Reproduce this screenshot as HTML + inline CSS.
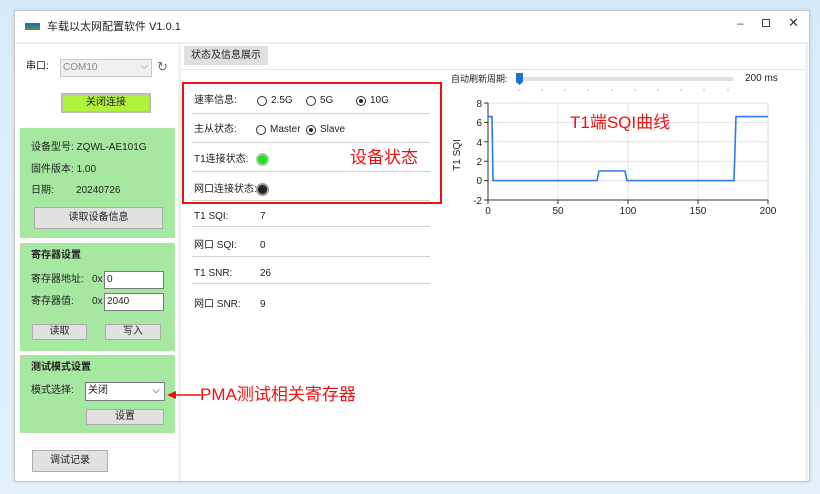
<!DOCTYPE html>
<html><head><meta charset="utf-8"><style>
*{margin:0;padding:0;box-sizing:border-box}
body{width:820px;height:494px;overflow:hidden;background:linear-gradient(180deg,#d6ebfa,#e3f1fb);font-family:"Liberation Sans","Noto Sans CJK SC",sans-serif;font-size:10px;line-height:12px;color:#222;position:relative}
.a{position:absolute;white-space:nowrap;line-height:12px}
.win{position:absolute;left:14px;top:10px;width:796px;height:472px;background:#fff;border:1px solid #c8c8c8;box-shadow:0 0 3px rgba(0,0,0,.15)}
.g{position:absolute;background:#a6e8a2}
.btn{position:absolute;background:#e1e1e1;border:1px solid #adadad;text-align:center;font-size:10px}
.inp{position:absolute;background:#fff;border:1px solid #7a7a7a;font-size:10px;padding-left:2px}
.ln{position:absolute;height:1px;background:#cfcfcf;left:192px;width:238px}
.rad{position:absolute;width:10px;height:10px;border:1px solid #333;border-radius:50%;background:#fff}
.rad.on::after{content:"";position:absolute;left:2px;top:2px;width:4px;height:4px;border-radius:50%;background:#222}
.red{color:#f01010;font-size:17px;line-height:20px}
</style></head><body>
<div class="win"></div>
<div class="a" style="left:15px;top:11px;width:794px;height:31px;background:#fff"></div>
<div class="a" style="left:25px;top:23px;width:15px;height:7px;background:linear-gradient(#2a6ac0 50%,#4a8a4a 50%)"></div>
<div class="a" style="left:47px;top:21px;font-size:11px">车载以太网配置软件 V1.0.1</div>
<div class="a" style="left:737px;top:17px;font-size:12px;color:#555">–</div>
<div class="a" style="left:762px;top:19px;width:8px;height:8px;border:1px solid #444"></div>
<div class="a" style="left:788px;top:17px;font-size:13px;color:#333">✕</div>
<div class="a" style="left:15px;top:42px;width:794px;height:2px;background:#f0f0f0"></div>
<div class="a" style="left:178px;top:44px;width:3px;height:437px;background:#f0f0f0"></div>
<div class="a" style="left:805px;top:44px;width:3px;height:437px;background:#f0f0f0"></div>
<!-- left -->
<div class="a" style="left:26px;top:61px;font-size:10px">串口:</div>
<div class="a" style="left:60px;top:59px;width:92px;height:18px;border:1px solid #ccc;background:#f0f0f0;color:#888;padding:2px 2px;font-size:10px">COM10<span style="position:absolute;right:3px;top:1px;color:#888">⌵</span></div>
<div class="a" style="left:157px;top:61px;font-size:13px;color:#666">↻</div>
<div class="btn" style="left:61px;top:93px;width:90px;height:20px;background:#b0f23c;border:2px solid #bcbcbc;line-height:16px">关闭连接</div>
<div class="g" style="left:20px;top:128px;width:155px;height:110px"></div>
<div class="a" style="left:31px;top:142px">设备型号: ZQWL-AE101G</div>
<div class="a" style="left:31px;top:164px">固件版本: 1.00</div>
<div class="a" style="left:31px;top:185px">日期:&nbsp;&nbsp;&nbsp;&nbsp;&nbsp;&nbsp;&nbsp; 20240726</div>
<div class="btn" style="left:34px;top:207px;width:129px;height:22px;line-height:20px">读取设备信息</div>
<div class="g" style="left:20px;top:243px;width:155px;height:108px"></div>
<div class="a" style="left:31px;top:250px;font-weight:bold">寄存器设置</div>
<div class="a" style="left:31px;top:274px">寄存器地址:</div>
<div class="a" style="left:92px;top:274px">0x</div>
<div class="inp" style="left:104px;top:271px;width:60px;height:18px;line-height:16px">0</div>
<div class="a" style="left:31px;top:296px">寄存器值:</div>
<div class="a" style="left:92px;top:296px">0x</div>
<div class="inp" style="left:104px;top:293px;width:60px;height:18px;line-height:16px">2040</div>
<div class="btn" style="left:32px;top:324px;width:55px;height:16px;line-height:14px">读取</div>
<div class="btn" style="left:105px;top:324px;width:56px;height:16px;line-height:14px">写入</div>
<div class="g" style="left:20px;top:355px;width:155px;height:78px"></div>
<div class="a" style="left:31px;top:362px;font-weight:bold">测试模式设置</div>
<div class="a" style="left:31px;top:385px">模式选择:</div>
<div class="inp" style="left:85px;top:382px;width:80px;height:19px;line-height:16px">关闭<span style="position:absolute;right:4px;top:0">⌵</span></div>
<div class="btn" style="left:86px;top:409px;width:78px;height:16px;line-height:14px">设置</div>
<div class="btn" style="left:32px;top:450px;width:76px;height:22px;line-height:20px">调试记录</div>
<!-- right -->
<div class="a" style="left:184px;top:46px;width:84px;height:19px;background:#e0e0e0;text-align:center;line-height:19px">状态及信息展示</div>
<div class="a" style="left:181px;top:69px;width:624px;height:1px;background:#e6e6e6"></div>
<div class="a" style="left:182px;top:82px;width:260px;height:122px;border:2px solid #f01010"></div>
<div class="a" style="left:194px;top:95px">速率信息:</div>
<div class="rad" style="left:257px;top:96px"></div><div class="a" style="left:271px;top:95px">2.5G</div>
<div class="rad" style="left:306px;top:96px"></div><div class="a" style="left:320px;top:95px">5G</div>
<div class="rad on" style="left:356px;top:96px"></div><div class="a" style="left:370px;top:95px">10G</div>
<div class="ln" style="top:113px"></div>
<div class="a" style="left:194px;top:124px">主从状态:</div>
<div class="rad" style="left:256px;top:125px"></div><div class="a" style="left:270px;top:124px">Master</div>
<div class="rad on" style="left:306px;top:125px"></div><div class="a" style="left:320px;top:124px">Slave</div>
<div class="ln" style="top:142px"></div>
<div class="a" style="left:194px;top:154px">T1连接状态:</div>
<div class="a" style="left:256px;top:153px;width:13px;height:13px;border-radius:50%;background:#22e022;border:2px solid #9ad49a"></div>
<div class="ln" style="top:171px"></div>
<div class="a" style="left:194px;top:184px">网口连接状态:</div>
<div class="a" style="left:256px;top:183px;width:13px;height:13px;border-radius:50%;background:#222;border:2px solid #999"></div>
<div class="ln" style="top:200px"></div>
<div class="a red" style="left:350px;top:148px">设备状态</div>
<div class="a" style="left:194px;top:211px">T1 SQI:</div><div class="a" style="left:260px;top:211px">7</div>
<div class="ln" style="top:226px"></div>
<div class="a" style="left:194px;top:240px">网口 SQI:</div><div class="a" style="left:260px;top:240px">0</div>
<div class="ln" style="top:256px"></div>
<div class="a" style="left:194px;top:268px">T1 SNR:</div><div class="a" style="left:260px;top:268px">26</div>
<div class="ln" style="top:283px"></div>
<div class="a" style="left:194px;top:299px">网口 SNR:</div><div class="a" style="left:260px;top:299px">9</div>
<div class="a" style="left:451px;top:73px;font-size:9px">自动刷新周期:</div>
<div class="a" style="left:520px;top:77px;width:213px;height:4px;background:#e0e0e0"></div>
<div class="a" style="left:516px;top:73px;width:7px;height:12px;background:#1a73d0;clip-path:polygon(0 0,100% 0,100% 75%,50% 100%,0 75%)"></div>
<div class="a" style="left:745px;top:73px">200 ms</div>
<svg class="a" style="left:440px;top:85px" width="370" height="145" font-family="Liberation Sans" font-size="10">
<g stroke="#aaa" stroke-width="0.8">
<line x1="79" y1="4" x2="79" y2="6"/><line x1="102" y1="4" x2="102" y2="6"/><line x1="125" y1="4" x2="125" y2="6"/><line x1="148" y1="4" x2="148" y2="6"/><line x1="172" y1="4" x2="172" y2="6"/><line x1="195" y1="4" x2="195" y2="6"/><line x1="218" y1="4" x2="218" y2="6"/><line x1="241" y1="4" x2="241" y2="6"/><line x1="264" y1="4" x2="264" y2="6"/><line x1="288" y1="4" x2="288" y2="6"/>
</g>
<g stroke="#e2e2e2" stroke-width="1">
<line x1="48" y1="18" x2="328" y2="18"/><line x1="48" y1="37.4" x2="328" y2="37.4"/><line x1="48" y1="56.8" x2="328" y2="56.8"/><line x1="48" y1="76.2" x2="328" y2="76.2"/><line x1="48" y1="95.6" x2="328" y2="95.6"/>
<line x1="118" y1="18" x2="118" y2="115"/><line x1="188" y1="18" x2="188" y2="115"/><line x1="258" y1="18" x2="258" y2="115"/><line x1="328" y1="18" x2="328" y2="115"/>
</g>
<g stroke="#333" stroke-width="1">
<line x1="48" y1="18" x2="48" y2="115"/><line x1="48" y1="115" x2="328" y2="115"/>
<line x1="44" y1="18" x2="48" y2="18"/><line x1="44" y1="37.4" x2="48" y2="37.4"/><line x1="44" y1="56.8" x2="48" y2="56.8"/><line x1="44" y1="76.2" x2="48" y2="76.2"/><line x1="44" y1="95.6" x2="48" y2="95.6"/><line x1="44" y1="115" x2="48" y2="115"/>
<line x1="48" y1="115" x2="48" y2="119"/><line x1="118" y1="115" x2="118" y2="119"/><line x1="188" y1="115" x2="188" y2="119"/><line x1="258" y1="115" x2="258" y2="119"/><line x1="328" y1="115" x2="328" y2="119"/>
</g>
<g text-anchor="end" fill="#222"><text x="42" y="22">8</text><text x="42" y="41">6</text><text x="42" y="61">4</text><text x="42" y="80">2</text><text x="42" y="99">0</text><text x="42" y="119">-2</text></g>
<g text-anchor="middle" fill="#222"><text x="48" y="129">0</text><text x="118" y="129">50</text><text x="188" y="129">100</text><text x="258" y="129">150</text><text x="328" y="129">200</text></g>
<text x="20" y="70" transform="rotate(-90 20 70)" text-anchor="middle" fill="#222">T1 SQI</text>
<polyline fill="none" stroke="#2a7de1" stroke-width="1.6" points="48,31.6 52,31.6 53,95.6 157,95.6 159,86 185,86 187,95.6 294,95.6 296,31.6 328,31.6"/>
<text x="130" y="43" fill="#f01010" font-size="17" font-family="Liberation Sans,Noto Sans CJK SC">T1端SQI曲线</text>
</svg>
<svg class="a" style="left:165px;top:388px" width="40" height="14"><line x1="8" y1="7" x2="36" y2="7" stroke="#f01010" stroke-width="1.5"/><polygon points="2,7 11,3 11,11" fill="#f01010"/></svg>
<div class="a red" style="left:200px;top:385px">PMA测试相关寄存器</div>
</body></html>
